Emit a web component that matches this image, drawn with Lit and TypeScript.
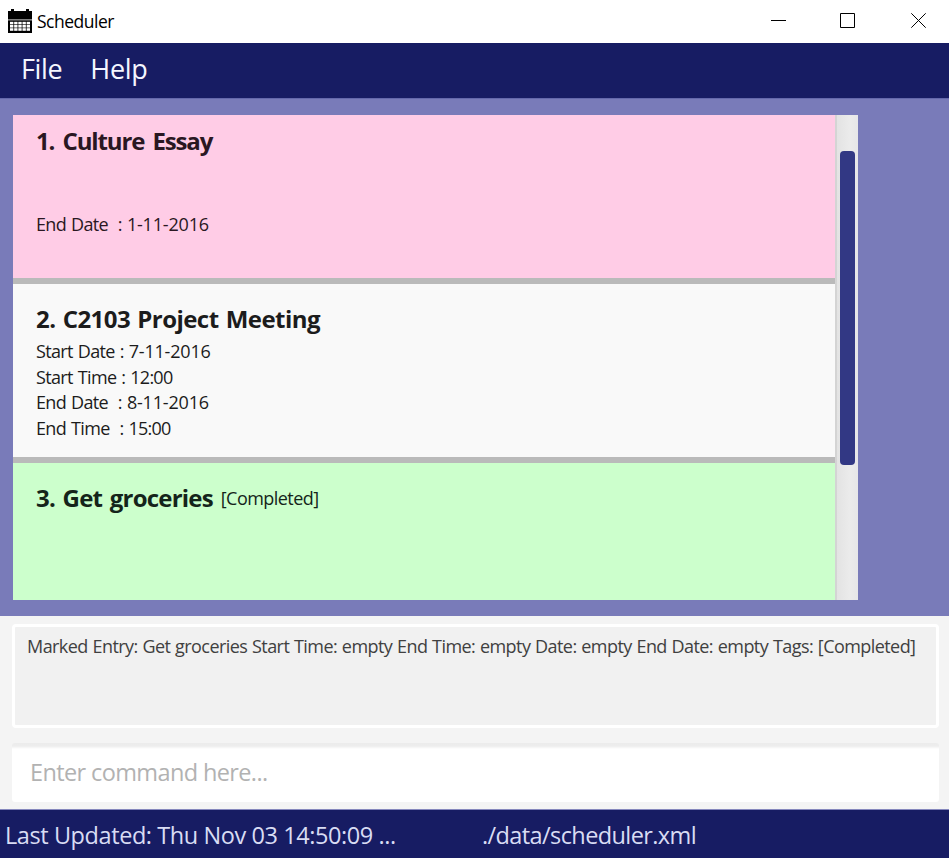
import { LitElement, html, css, svg } from "lit";
import { customElement, property } from "lit/decorators.js";

interface Row {
  label: string;
  value: string;
  kind: "date" | "time";
}

interface Entry {
  title: string;
  tone: string;
  tag?: string;
  rows: (Row | null)[];
}

const ENTRIES: Entry[] = [
  {
    title: "1. Culture Essay",
    tone: "overdue",
    rows: [null, null, { label: "End Date\u00a0 : ", value: "1-11-2016", kind: "date" }],
  },
  {
    title: "2. C2103 Project Meeting",
    tone: "plain",
    rows: [
      { label: "Start Date : ", value: "7-11-2016", kind: "date" },
      { label: "Start Time : ", value: "12:00", kind: "time" },
      { label: "End Date\u00a0 : ", value: "8-11-2016", kind: "date" },
      { label: "End Time\u00a0 : ", value: "15:00", kind: "time" },
    ],
  },
  { title: "3. Get groceries", tone: "done", tag: "[Completed]", rows: [] },
];

@customElement("entry-card")
class EntryCard extends LitElement {
  @property({ attribute: false }) entry!: Entry;

  static styles = css`
    :host { display: block; flex: none; }
    .card {
      box-sizing: border-box;
      height: 178.5px;
      padding: 17.5px 0 0 23px;
      border-bottom: 6px solid #bababa;
      color: #1c1c1c;
    }
    .overdue { background: #ffcce6; color: #2a1722; }
    .plain { background: #f9f9f9; }
    .done { background: #ccffcc; color: #14241a; }
    .head { display: flex; align-items: center; height: 34px; margin-bottom: 3.3px; }
    .title { font-size: 24px; font-weight: 700; white-space: pre; letter-spacing: -0.55px; word-spacing: 1.5px; }
    .overdue .title { letter-spacing: -1.15px; word-spacing: 3.2px; }
    .done .title { letter-spacing: -0.8px; word-spacing: 2.2px; }
    .tag { margin-left: 8px; font-size: 18px; letter-spacing: -0.55px; padding-top: 2px; }
    .row { height: 25.5px; line-height: 25.5px; font-size: 18px; white-space: pre; }
    .label { letter-spacing: -0.65px; word-spacing: 0.9px; }
    .date { letter-spacing: -0.18px; }
    .time { letter-spacing: -0.75px; }
  `;

  render() {
    const e = this.entry;
    return html`<div class="card ${e.tone}">
      <div class="head">
        <span class="title">${e.title}</span>
        ${e.tag ? html`<span class="tag">${e.tag}</span>` : ""}
      </div>
      ${e.rows.map((r) =>
        r
          ? html`<div class="row"><span class="label">${r.label}</span><span class=${r.kind}>${r.value}</span></div>`
          : html`<div class="row"></div>`,
      )}
    </div>`;
  }
}

@customElement("app-root")
class AppRoot extends LitElement {
  static styles = css`
    :host {
      display: flex;
      flex-direction: column;
      height: 858px;
      overflow: hidden;
      background: #f4f4f4;
      font-family: "Open Sans", "Noto Sans", sans-serif;
    }
    .titlebar {
      box-sizing: border-box;
      display: flex;
      align-items: center;
      height: 43px;
      padding-bottom: 2px;
      flex: none;
      background: #fff;
      color: #000;
    }
    .logo { width: 24px; height: 24px; margin: 0 5px 0 8px; flex: none; }
    .name { flex: 1; font-size: 17.5px; letter-spacing: -0.5px; }
    .controls { display: flex; padding-right: 23px; }
    .controls svg { width: 15px; height: 15px; display: block; }
    .minimize { margin-right: 54px; }
    .maximize { margin-right: 56px; }
    .menubar {
      display: flex;
      box-sizing: border-box;
      height: 56px;
      flex: none;
      gap: 28px;
      padding-left: 21px;
      border-bottom: 1px solid #6468ab;
      background: #171c63;
      color: #f4f6ff;
      font-size: 27px;
      line-height: 52px;
      letter-spacing: -0.35px;
    }
    .main { box-sizing: border-box; height: 517px; flex: none; padding: 16px 0 0 13px; background: #797bb9; }
    .list { display: flex; width: 845px; height: 485px; overflow: hidden; }
    .entries { flex: 1; display: flex; flex-direction: column; height: 100%; overflow: hidden; }
    .entries entry-card:first-child { margin-top: -9.3px; }
    .track {
      box-sizing: border-box;
      width: 23px;
      padding: 36px 3px 0 3px;
      border-left: 2px solid #d4d4d4;
      background: linear-gradient(90deg, #e3e3e3, #ebebeb 60%, #e6e6e8);
    }
    .thumb { height: 313.5px; width: 15px; border-radius: 4px; background: #323884; }
    .result {
      box-sizing: border-box;
      height: 104px;
      margin: 8px 10px 0 12px;
      flex: none;
      padding: 6px 0 0 12px;
      border: 3px solid #fff;
      border-radius: 4px;
      background: #f1f1f1;
      color: #404040;
      font-size: 18px;
      line-height: 26px;
      letter-spacing: -0.56px;
      word-spacing: 0.6px;
      white-space: nowrap;
    }
    .command {
      box-sizing: border-box;
      height: 59px;
      flex: none;
      margin: 15px 10px 7px 12px;
      padding: 5px 0 0 18px;
      border-radius: 3px;
      background: linear-gradient(#ececec, #ededed 3px, #fff 6px);
      color: #b2b2b2;
      font-size: 23.5px;
      line-height: 49px;
      letter-spacing: -0.62px;
    }
    .status {
      box-sizing: border-box;
      display: grid;
      grid-template-columns: 477px 1fr;
      flex: 1;
      padding-left: 5px;
      border-top: 1px solid #8688bd;
      background: #171c63;
      color: #d9dcf4;
      font-size: 23.5px;
      line-height: 50px;
      letter-spacing: -0.42px;
    }
    .path { letter-spacing: -0.6px; }
  `;

  render() {
    const cells = [0, 1, 2].flatMap((r) =>
      [0, 1, 2, 3, 4].map((c) => svg`<rect x=${2 + c * 4.15} y=${12.8 + r * 3.2} width="3.4" height="2.6" fill="#fff"/>`),
    );
    return html`
      <div class="titlebar">
        <svg class="logo" viewBox="0 0 24 24">
          <path d="M0 2h3V0h3v2h12V0h3v2h3v8.6H0z" fill="#000" />
          <path d="M0 11.3h24V24H0z" fill="#000" />
          ${cells}
        </svg>
        <span class="name">Scheduler</span>
        <div class="controls">
          <svg class="minimize" viewBox="0 0 15 15"><path d="M0 7.5h15" stroke="#000" /></svg>
          <svg class="maximize" viewBox="0 0 15 15"><path d="M.5.5h14v14H.5z" fill="none" stroke="#000" /></svg>
          <svg viewBox="0 0 15 15"><path d="M.3.3l14.4 14.4M14.7.3L.3 14.7" stroke="#000" /></svg>
        </div>
      </div>
      <div class="menubar"><span>File</span><span>Help</span></div>
      <div class="main">
        <div class="list">
          <div class="entries">${ENTRIES.map((e) => html`<entry-card .entry=${e}></entry-card>`)}</div>
          <div class="track"><div class="thumb"></div></div>
        </div>
      </div>
      <div class="result">Marked Entry: Get groceries Start Time: empty End Time: empty Date: empty End Date: empty Tags: [Completed]</div>
      <div class="command">Enter command here...</div>
      <div class="status"><span>Last Updated: Thu Nov 03 14:50:09 ...</span><span class="path">./data/scheduler.xml</span></div>
    `;
  }
}
